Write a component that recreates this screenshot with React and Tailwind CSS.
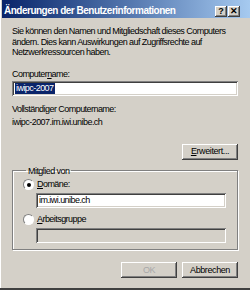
import React from 'react';

const raised =
  'shadow-[inset_-1px_-1px_#404040,inset_1px_1px_#ffffff,inset_-2px_-2px_#808080,inset_2px_2px_#d4d0c8]';
const sunken =
  'shadow-[inset_1px_1px_#808080,inset_-1px_-1px_#ffffff,inset_2px_2px_#404040,inset_-2px_-2px_#d4d0c8]';

const TitleButton = ({ children }) => (
  <span
    className={`flex h-[11px] w-[12px] items-center justify-center bg-[#d4d0c8] text-[9px] font-bold leading-none tracking-normal text-black ${raised}`}
  >
    {children}
  </span>
);

const Button = ({ children, disabled }) => (
  <button
    className={`flex h-[16px] w-[56px] shrink-0 items-center justify-center bg-[#d4d0c8] text-[9px] leading-none tracking-[-0.4px] ${raised} ${
      disabled ? 'text-[#a8a8a8]' : 'text-black'
    }`}
  >
    {children}
  </button>
);

const Radio = ({ checked }) => (
  <span className="flex h-[11px] w-[11px] shrink-0 items-center justify-center rounded-full border border-t-[#808080] border-l-[#808080] border-b-white border-r-white bg-white">
    {checked && <span className="h-[4px] w-[4px] rounded-full bg-black" />}
  </span>
);

const App = () => {
  return (
    <div className="h-[294px] w-[250px] overflow-hidden bg-white [font-family:'Liberation_Sans',Arial,sans-serif]">
      <div className="flex h-[290px] w-[250px] flex-col bg-[#d4d0c8] pl-[2px] shadow-[inset_0_-2px_#404040,inset_1px_0_#ffffff]">
        {/* title bar */}
        <div className="flex h-[18px] items-center bg-linear-to-r from-[#0a246a] to-[#a6caf0] pl-[2px] pr-[10px] pt-[4px]">
          <span className="min-w-0 flex-1 whitespace-nowrap text-[10px] font-bold leading-none tracking-[-0.5px] text-white">
            Änderungen der Benutzerinformationen
          </span>
          <div className="flex gap-[1px]">
            <TitleButton>?</TitleButton>
            <TitleButton>✕</TitleButton>
          </div>
        </div>

        <div className="flex flex-col pl-[10px] pr-[12px] text-[9px] leading-[10.5px] tracking-[-0.55px] text-black">
          <p className="mt-[8px] whitespace-nowrap">
            Sie können den Namen und Mitgliedschaft dieses Computers
            <br />
            ändern. Dies kann Auswirkungen auf Zugriffsrechte auf
            <br />
            Netzwerkressourcen haben.
          </p>

          <div className="mt-[11px]">
            Computer<span className="underline">n</span>ame:
          </div>
          <div className={`mt-[2px] flex h-[15px] items-center bg-white px-[3px] ${sunken}`}>
            <span className="bg-[#0a246a] px-[1px] text-white">iwipc-2007</span>
          </div>

          <div className="mt-[8px]">Vollständiger Computername:</div>
          <div className="mt-[2.5px]">iwipc-2007.im.iwi.unibe.ch</div>

          <div className="mt-[16px] flex justify-end">
            <Button>
              <span className="underline">E</span>rweitert...
            </Button>
          </div>

          <fieldset className="mt-[6px] min-w-0 border border-[#808080] pb-[6px] pl-[10px] pr-[11px] shadow-[1px_1px_#ffffff,inset_1px_1px_#ffffff]">
            <legend className="ml-[3px] px-[2px]">Mitglied von</legend>
            <div className="mt-[3px] flex items-center gap-[3px]">
              <Radio checked />
              <span>
                <span className="underline">D</span>omäne:
              </span>
            </div>
            <div className={`ml-[13px] mt-[3px] flex h-[15px] items-center bg-white px-[3px] ${sunken}`}>
              im.iwi.unibe.ch
            </div>
            <div className="mt-[6px] flex items-center gap-[3px]">
              <Radio />
              <span>
                <span className="underline">A</span>rbeitsgruppe
              </span>
            </div>
            <div className={`ml-[13px] mt-[3px] h-[15px] bg-[#d4d0c8] ${sunken}`} />
          </fieldset>

          <div className="mt-[12px] flex justify-end gap-[5px]">
            <Button disabled>OK</Button>
            <Button>Abbrechen</Button>
          </div>
        </div>
      </div>
    </div>
  );
};

export default App;
